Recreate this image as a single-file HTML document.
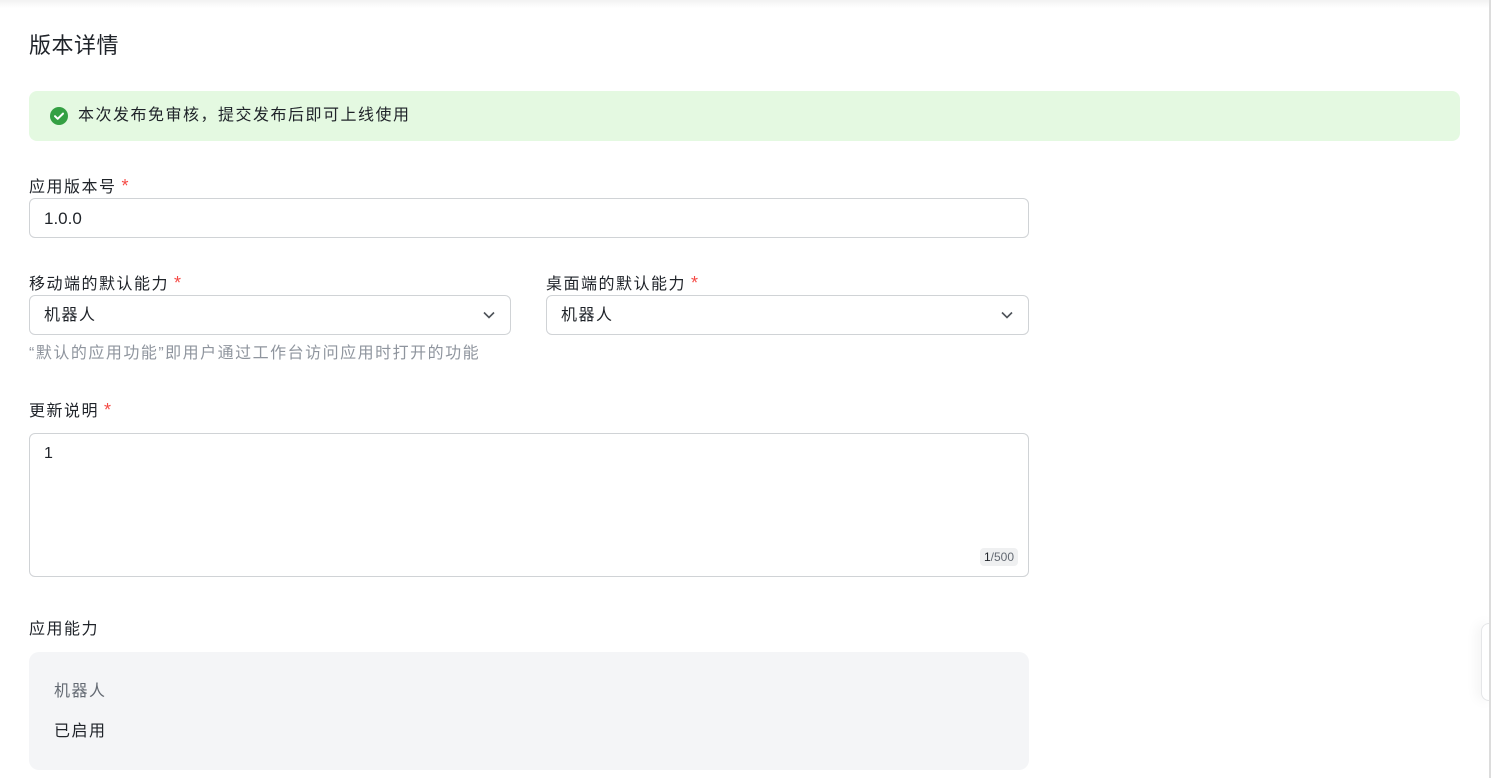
<!DOCTYPE html>
<html><head><meta charset="utf-8"><style>
*{box-sizing:border-box;margin:0;padding:0}
body{width:1491px;height:778px;overflow:hidden;background:#fff;font-family:"Liberation Sans","Noto Sans CJK SC",sans-serif;color:#1f2329;position:relative}
.top{position:absolute;left:0;top:0;width:1491px;height:8px;background:linear-gradient(#f2f2f2,#fff)}
.vline{position:absolute;left:1489px;top:0;width:2px;height:778px;background:#dcdcdc}
.abs{position:absolute}
h1{position:absolute;left:29px;top:31px;font-size:22px;font-weight:400;line-height:30px;letter-spacing:0.5px}
.alert{position:absolute;left:29px;top:91px;width:1431px;height:50px;background:#e4f9e1;border-radius:8px;font-size:16px;line-height:50px;padding-left:49px;letter-spacing:1.5px}
.alert svg{position:absolute;left:21px;top:16px}
.lbl{position:absolute;font-size:16px;line-height:22px;letter-spacing:1.5px}
.lbl i{font-style:normal;color:#f54a45;margin-left:5px;font-size:18px}
.inp{position:absolute;border:1px solid #d0d3d6;border-radius:6px;font-size:16px;padding-left:14px;line-height:40px;background:#fff;letter-spacing:1.5px}
.inp svg{position:absolute;right:14px;top:14px}
.hint{position:absolute;left:29px;top:343px;font-size:16px;color:#8f959e;line-height:22px;letter-spacing:1.5px}
.cnt{position:absolute;right:10px;bottom:10px;background:#eff0f1;border-radius:4px;font-size:12px;line-height:18px;padding:0 4px;color:#646a73;letter-spacing:0}
.cnt b{font-weight:400;color:#1f2329}
.box{position:absolute;left:29px;top:652px;width:1000px;height:118px;background:#f4f5f7;border-radius:10px}
.tab{position:absolute;left:1481px;top:623px;width:12px;height:78px;border:1px solid #e5e6e8;border-right:none;border-radius:8px 0 0 8px;background:#fff;box-shadow:-4px 0 12px rgba(0,0,0,.05)}
</style></head><body>
<div class="top"></div>
<h1>版本详情</h1>
<div class="alert"><svg width="18" height="18" viewBox="0 0 18 18"><circle cx="9" cy="9" r="9" fill="#34a043"/><path d="M5 9.2l2.7 2.6L13 6.6" stroke="#fff" stroke-width="2" fill="none" stroke-linecap="round" stroke-linejoin="round"/></svg>本次发布免审核，提交发布后即可上线使用</div>
<div class="lbl" style="left:29px;top:175px">应用版本号<i>*</i></div>
<div class="inp" style="left:29px;top:198px;width:1000px;height:40px;letter-spacing:0;font-size:17px">1.0.0</div>
<div class="lbl" style="left:29px;top:272px">移动端的默认能力<i>*</i></div>
<div class="inp" style="left:29px;top:295px;width:482px;height:40px">机器人<svg width="14" height="10" viewBox="0 0 14 10"><path d="M2 2.5l5 5 5-5" stroke="#4e5359" stroke-width="1.6" fill="none"/></svg></div>
<div class="lbl" style="left:546px;top:272px">桌面端的默认能力<i>*</i></div>
<div class="inp" style="left:546px;top:295px;width:483px;height:40px">机器人<svg width="14" height="10" viewBox="0 0 14 10"><path d="M2 2.5l5 5 5-5" stroke="#4e5359" stroke-width="1.6" fill="none"/></svg></div>
<div class="hint">“默认的应用功能”即用户通过工作台访问应用时打开的功能</div>
<div class="lbl" style="left:29px;top:399px">更新说明<i>*</i></div>
<div class="inp" style="left:29px;top:433px;width:1000px;height:144px;line-height:40px;letter-spacing:0">1<div class="cnt"><b>1</b>/500</div></div>
<div class="lbl" style="left:29px;top:619px">应用能力</div>
<div class="box">
<div class="abs" style="left:25px;top:29px;font-size:16px;color:#646a73;line-height:22px;letter-spacing:1.5px">机器人</div>
<div class="abs" style="left:25px;top:69px;font-size:16px;line-height:22px;letter-spacing:1.5px">已启用</div>
</div>
<div class="tab"></div>
<div class="vline"></div>
</body></html>
